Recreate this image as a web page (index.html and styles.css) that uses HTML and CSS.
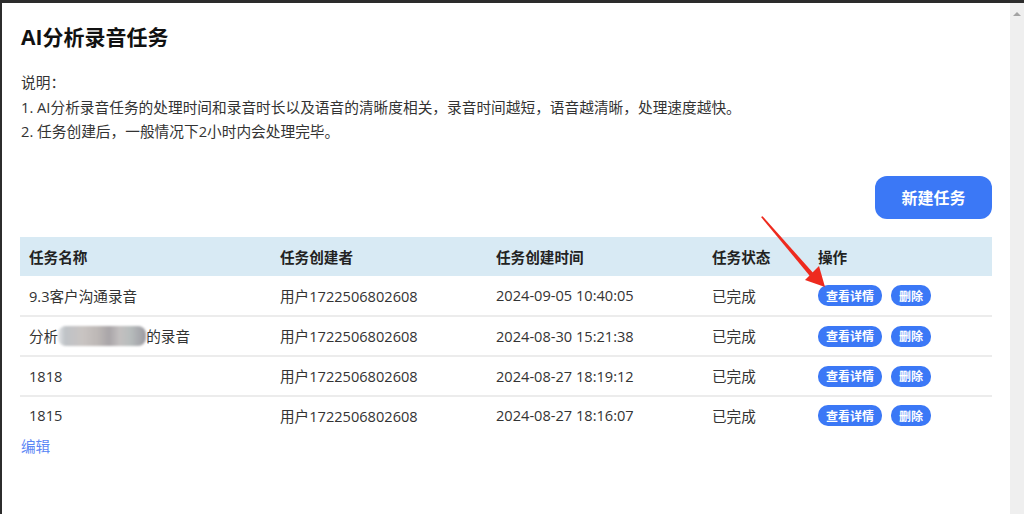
FILE: index.html
```html
<!DOCTYPE html>
<html lang="zh-CN">
<head>
  <meta charset="UTF-8">
  <title>AI分析录音任务</title>
  <link rel="stylesheet" href="styles.css">
</head>
<body>
  <div class="frame">
    <div class="page">
      <h1 class="title">AI分析录音任务</h1>

      <div class="desc">
        <p>说明：</p>
        <p>1. AI分析录音任务的处理时间和录音时长以及语音的清晰度相关，录音时间越短，语音越清晰，处理速度越快。</p>
        <p>2. 任务创建后，一般情况下2小时内会处理完毕。</p>
      </div>

      <div class="toolbar">
        <button class="btn-new">新建任务</button>
      </div>

      <table class="tasks">
        <colgroup>
          <col class="c-name">
          <col class="c-user">
          <col class="c-time">
          <col class="c-state">
          <col class="c-ops">
        </colgroup>
        <thead>
          <tr>
            <th>任务名称</th>
            <th>任务创建者</th>
            <th>任务创建时间</th>
            <th>任务状态</th>
            <th>操作</th>
          </tr>
        </thead>
        <tbody>
          <tr>
            <td>9.3客户沟通录音</td>
            <td>用户1722506802608</td>
            <td>2024-09-05 10:40:05</td>
            <td>已完成</td>
            <td><button class="op">查看详情</button><button class="op">删除</button></td>
          </tr>
          <tr>
            <td>分析<span class="blur"></span>的录音</td>
            <td>用户1722506802608</td>
            <td>2024-08-30 15:21:38</td>
            <td>已完成</td>
            <td><button class="op">查看详情</button><button class="op">删除</button></td>
          </tr>
          <tr>
            <td>1818</td>
            <td>用户1722506802608</td>
            <td>2024-08-27 18:19:12</td>
            <td>已完成</td>
            <td><button class="op">查看详情</button><button class="op">删除</button></td>
          </tr>
          <tr>
            <td>1815</td>
            <td>用户1722506802608</td>
            <td>2024-08-27 18:16:07</td>
            <td>已完成</td>
            <td><button class="op">查看详情</button><button class="op">删除</button></td>
          </tr>
        </tbody>
      </table>

      <a class="edit" href="#">编辑</a>

      <!-- red annotation arrow pointing at the first detail button -->
      <svg class="arrow" width="80" height="80" viewBox="0 0 80 80">
        <polygon points="0,0 1.6,-0.8 54,58 50.5,61" fill="#ee2a1e" transform="translate(3,3)"/>
        <polygon points="44,63 64,70 58,49" fill="#ee2a1e" transform="translate(3,3)"/>
      </svg>
    </div>
    <div class="scrollbar"><span class="up"></span></div>
  </div>
</body>
</html>
```

FILE: styles.css
```css
* {
  box-sizing: border-box;
}

body {
  margin: 0;
  padding: 0;
  background: #fff;
  font-family: "Open Sans", "Noto Sans CJK SC", sans-serif;
  color: #333;
  overflow: hidden;
}

.frame {
  display: flex;
  height: 514px;
  border-top: 3px solid #2c2c2c;
  border-left: 2px solid #2c2c2c;
}

.page {
  position: relative;
  flex: 1;
  padding: 19px 18px 0 19px;
}

.scrollbar {
  width: 14px;
  background: #efefef;
  display: flex;
  justify-content: center;
  padding-top: 9px;
}

.up {
  width: 0;
  height: 0;
  border-left: 4px solid transparent;
  border-right: 4px solid transparent;
  border-bottom: 4px solid #a3a3a3;
}

.title {
  margin: 0;
  font-size: 21px;
  line-height: 30px;
  font-weight: 700;
  color: #111;
}

.desc {
  margin-top: 18px;
  font-size: 14.7px;
  line-height: 24.5px;
  color: #333;
}

.desc p {
  margin: 0;
}

.toolbar {
  display: flex;
  justify-content: flex-end;
  margin-top: 32px;
}

.btn-new {
  width: 117px;
  height: 43px;
  border: none;
  border-radius: 12px;
  background: #3b78f6;
  color: #fff;
  font-family: inherit;
  font-size: 16px;
  font-weight: 700;
  cursor: pointer;
}

.tasks {
  width: 972px;
  margin: 18px 0 0 -1px;
  border-collapse: collapse;
  table-layout: fixed;
  font-size: 14.6px;
}

.c-name { width: 251px; }
.c-user { width: 216px; }
.c-time { width: 216px; }
.c-state { width: 106px; }
.c-ops { width: 183px; }

.tasks th {
  height: 39px;
  padding: 0 0 0 9px;
  text-align: left;
  background: #d8eaf4;
  font-weight: 700;
  color: #222;
}

.tasks td {
  height: 40px;
  padding: 0 0 0 9px;
  border-bottom: 2px solid #ececec;
  white-space: nowrap;
}

.tasks tbody tr:last-child td {
  border-bottom: none;
  height: 38px;
}

.op {
  height: 21px;
  padding: 0 8px;
  margin-right: 9px;
  border: none;
  border-radius: 10px;
  background: #3b78f6;
  color: #fff;
  font-family: inherit;
  font-size: 12px;
  font-weight: 700;
  vertical-align: middle;
}

.blur {
  display: inline-block;
  width: 88px;
  height: 20px;
  vertical-align: -4px;
  border-radius: 8px;
  background: linear-gradient(90deg, #e4e6e8 0%, #bfc3c7 8%, #c9c4c2 28%, #bdb8b6 45%, #a9a5a8 58%, #c3c0c0 70%, #b8bdbd 82%, #9c9ba2 100%);
  filter: blur(0.8px);
}

.edit {
  display: block;
  line-height: 24px;
  font-size: 14.6px;
  color: #5b86f5;
  text-decoration: none;
}

.arrow {
  position: absolute;
  left: 756px;
  top: 211px;
  overflow: visible;
}
```
